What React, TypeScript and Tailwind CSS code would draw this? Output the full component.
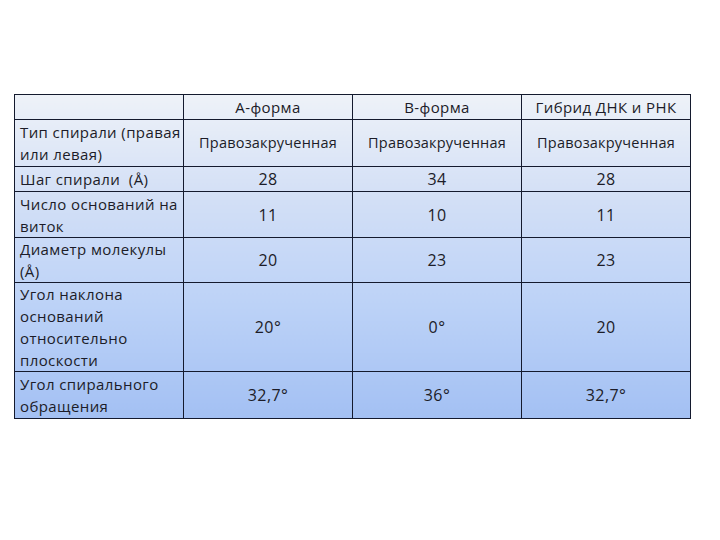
import React from "react"

type Row = { label: string[]; a: string; b: string; h: string; height: number; small?: boolean }

const rows: Row[] = [
  { label: ["Тип спирали (правая", "или левая)"], a: "Правозакрученная", b: "Правозакрученная", h: "Правозакрученная", height: 47, small: true },
  { label: ["Шаг спирали\u00a0\u00a0(Å)"], a: "28", b: "34", h: "28", height: 25 },
  { label: ["Число оснований на", "виток"], a: "11", b: "10", h: "11", height: 46 },
  { label: ["Диаметр молекулы", "(Å)"], a: "20", b: "23", h: "23", height: 45 },
  { label: ["Угол наклона", "оснований", "относительно", "плоскости"], a: "20°", b: "0°", h: "20", height: 89 },
  { label: ["Угол спирального", "обращения"], a: "32,7°", b: "36°", h: "32,7°", height: 47 },
]

const cell = "border border-[#141a2e] px-[5px] align-middle"

export default function App() {
  return (
    <div className="w-[720px] h-[540px] bg-white pt-[94px] pl-[14px] text-[#1c1c28] text-[15px] leading-[22px] tracking-[0.4px] font-['Open_Sans','Noto_Sans',sans-serif]">
      <table className="border-collapse table-fixed w-[676px] bg-[linear-gradient(180deg,#eef2f8_0%,#d4e0f6_30%,#bcd2f7_65%,#a3c0f3_100%)]">
        <colgroup>
          <col className="w-[169px]" />
          <col className="w-[169px]" />
          <col className="w-[169px]" />
          <col className="w-[169px]" />
        </colgroup>
        <thead>
          <tr className="h-[25px]">
            <th className={cell}></th>
            <th className={`${cell} font-normal text-center`}>А-форма</th>
            <th className={`${cell} font-normal text-center`}>В-форма</th>
            <th className={`${cell} font-normal text-center whitespace-nowrap`}>Гибрид ДНК и РНК</th>
          </tr>
        </thead>
        <tbody>
          {rows.map((r, i) => {
            const v = `${cell} text-center whitespace-nowrap ${r.small ? "text-[14.5px] tracking-[0.2px]" : "text-[16px]"}`
            return (
              <tr key={i} style={{ height: r.height }}>
                <td className={`${cell} text-left whitespace-nowrap`}>
                  {r.label.map((l, j) => (
                    <div key={j}>{l}</div>
                  ))}
                </td>
                <td className={v}>{r.a}</td>
                <td className={v}>{r.b}</td>
                <td className={v}>{r.h}</td>
              </tr>
            )
          })}
        </tbody>
      </table>
    </div>
  )
}
